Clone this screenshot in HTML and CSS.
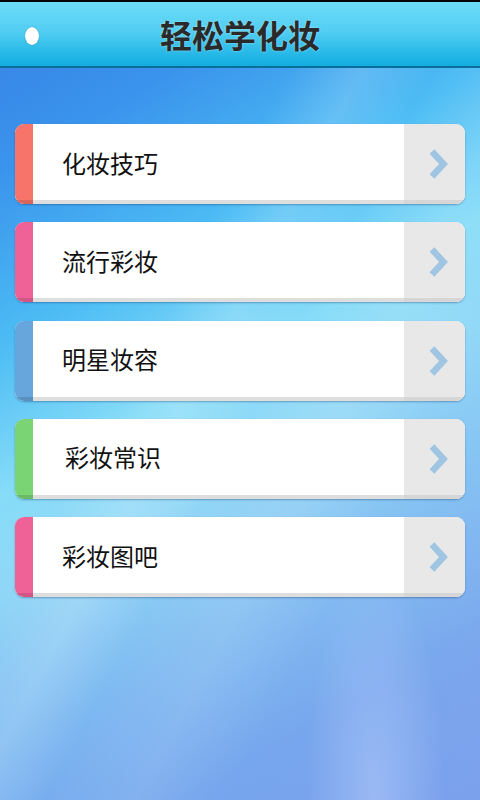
FILE: index.html
```html
<!DOCTYPE html>
<html lang="zh-CN">
<head>
<meta charset="utf-8">
<title>轻松学化妆</title>
<link rel="stylesheet" href="styles.css">
</head>
<body>
<div class="screen">
  <div class="topline"></div>
  <header class="header">
    <span class="dot"></span>
    <h1 class="title">轻松学化妆</h1>
  </header>
  <main class="list">
    <a class="card c-orange"><span class="bar"></span><span class="label">化妆技巧</span><span class="arrow"><svg viewBox="0 0 20 32" width="20" height="32"><path d="M4 3.5 L15.5 16 L4 28.5" fill="none" stroke="#9fc5e2" stroke-width="6.5"/></svg></span></a>
    <a class="card c-pink"><span class="bar"></span><span class="label">流行彩妆</span><span class="arrow"><svg viewBox="0 0 20 32" width="20" height="32"><path d="M4 3.5 L15.5 16 L4 28.5" fill="none" stroke="#9fc5e2" stroke-width="6.5"/></svg></span></a>
    <a class="card c-blue"><span class="bar"></span><span class="label">明星妆容</span><span class="arrow"><svg viewBox="0 0 20 32" width="20" height="32"><path d="M4 3.5 L15.5 16 L4 28.5" fill="none" stroke="#9fc5e2" stroke-width="6.5"/></svg></span></a>
    <a class="card c-green"><span class="bar"></span><span class="label l4">彩妆常识</span><span class="arrow"><svg viewBox="0 0 20 32" width="20" height="32"><path d="M4 3.5 L15.5 16 L4 28.5" fill="none" stroke="#9fc5e2" stroke-width="6.5"/></svg></span></a>
    <a class="card c-pink"><span class="bar"></span><span class="label">彩妆图吧</span><span class="arrow"><svg viewBox="0 0 20 32" width="20" height="32"><path d="M4 3.5 L15.5 16 L4 28.5" fill="none" stroke="#9fc5e2" stroke-width="6.5"/></svg></span></a>
  </main>
</div>
</body>
</html>
```
FILE: styles.css
```css
html, body {
  margin: 0;
  padding: 0;
}
body {
  font-family: "Noto Sans CJK SC", "Noto Sans", sans-serif;
}
.screen {
  width: 480px;
  height: 800px;
  overflow: hidden;
  display: flex;
  flex-direction: column;
  background:
    radial-gradient(ellipse 70px 240px at 78% 100%, rgba(205,220,255,0.4), rgba(205,220,255,0) 100%),
    linear-gradient(118deg, rgba(255,255,255,0) 36%, rgba(255,255,255,0.16) 44%, rgba(255,255,255,0) 52%, rgba(255,255,255,0.1) 62%, rgba(255,255,255,0) 72%),
    linear-gradient(180deg, rgba(90,150,235,0) 70%, rgba(90,150,235,0.25) 100%),
    linear-gradient(150deg, #3780e6 0%, #3a94ec 16%, #4cbcf4 32%, #86dcf8 46%, #92d8f7 56%, #84c0f2 70%, #7eaaee 84%, #86a4ec 100%);
}
.topline {
  height: 2px;
  background: #050505;
}
.header {
  height: 64px;
  border-bottom: 2px solid #0b6e98;
  background: linear-gradient(180deg, #6cdcf8 0%, #52cef2 45%, #22b6e6 85%, #12ade0 100%);
  display: flex;
  align-items: center;
  justify-content: center;
  position: relative;
}
.dot {
  position: absolute;
  left: 25px;
  top: 25px;
  width: 14px;
  height: 18px;
  border-radius: 50%;
  background: #ffffff;
  box-shadow: 0 0 1px rgba(0,60,100,0.6);
}
.title {
  margin: 0;
  font-size: 32px;
  font-weight: 700;
  color: #2a2a2a;
  text-shadow: 0 0 2px rgba(255,255,255,0.6);
}
.list {
  display: flex;
  flex-direction: column;
  gap: 18.25px;
  padding: 56px 15px 0 15px;
}
.card {
  display: flex;
  align-items: stretch;
  height: 80px;
  border-radius: 9px;
  overflow: hidden;
  background: #ffffff;
  box-shadow: inset 0 -4px 0 #dedede, 0 1px 2px rgba(0,40,90,0.35);
}
.bar {
  width: 18px;
  flex: none;
  box-shadow: inset 0 -4px 0 rgba(0,0,0,0.12);
}
.c-orange .bar { background: #f7746a; }
.c-pink .bar { background: #ee6298; }
.c-blue .bar { background: #66a6dc; }
.c-green .bar { background: #7ad474; }
.label {
  flex: 1;
  display: flex;
  align-items: center;
  padding-left: 29px;
  padding-bottom: 4px;
  font-size: 24px;
  color: #111111;
}
.l4 { padding-left: 32px; }
.arrow {
  width: 61px;
  flex: none;
  background: #e8e8e8;
  box-shadow: inset 0 -4px 0 #d6d6d6;
  display: flex;
  align-items: center;
  justify-content: center;
  padding-bottom: 4px;
  box-sizing: border-box;
}
.arrow svg {
  margin-left: 6px;
  margin-top: 4px;
}
```
